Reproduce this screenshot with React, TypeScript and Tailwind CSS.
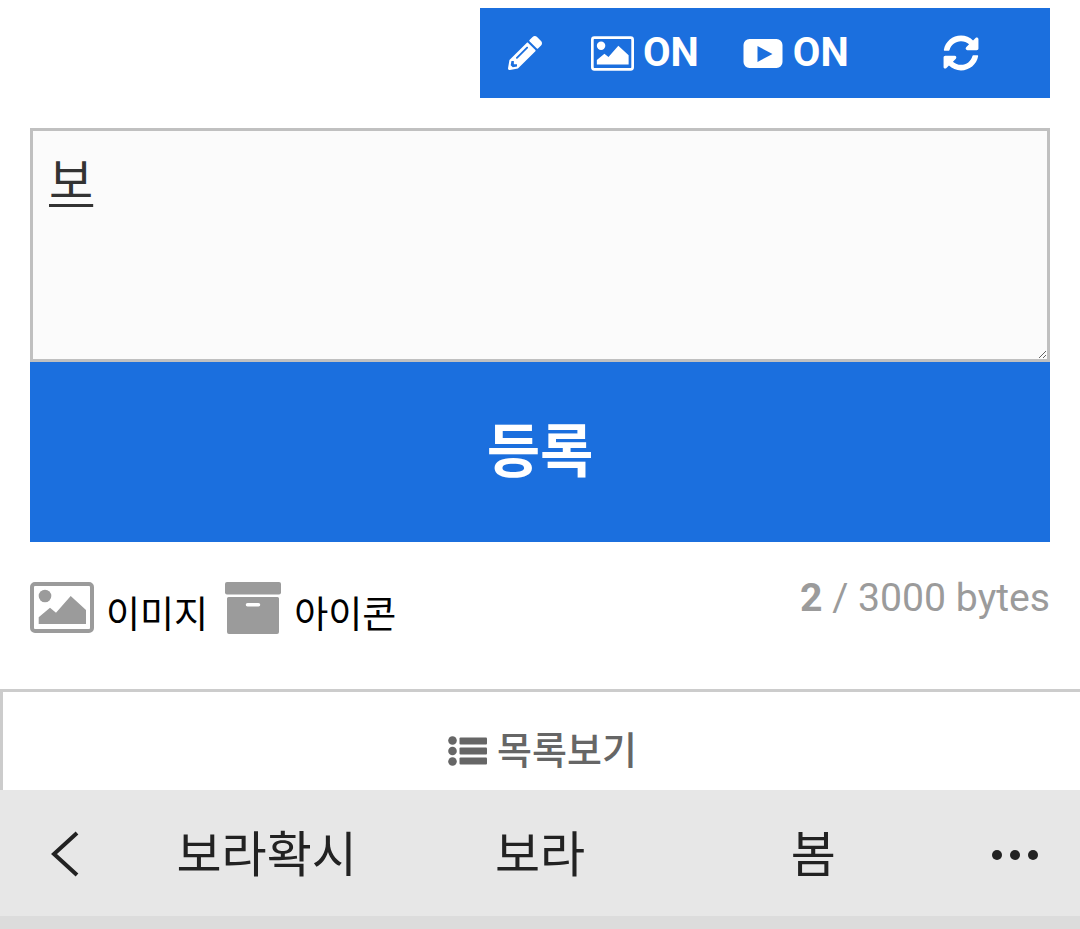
import React from 'react';
import { FaPencilAlt, FaSyncAlt } from 'react-icons/fa';

const cjk = "font-['Roboto','Noto_Sans_CJK_KR',sans-serif]";

const ImageIcon: React.FC<{ className?: string }> = ({ className }) => (
  <svg viewBox="0 0 64 51" fill="currentColor" className={className}>
    <rect x="2" y="2" width="60" height="47" rx="3" fill="none" stroke="currentColor" strokeWidth="4" />
    <circle cx="15" cy="14" r="6.3" />
    <path d="M8.7 35.3 20 25.7l6 5L40.7 14 56 28v14H8.700z" />
  </svg>
);

const PlayIcon: React.FC<{ className?: string }> = ({ className }) => (
  <svg viewBox="0 0 39 29" fill="currentColor" fillRule="evenodd" className={className}>
    <path d="M6 0h27a6 6 0 0 1 6 6v17a6 6 0 0 1-6 6H6a6 6 0 0 1-6-6V6a6 6 0 0 1 6-6zM14 7v16l15-8z" />
  </svg>
);

const BoxIcon: React.FC<{ className?: string }> = ({ className }) => (
  <svg viewBox="0 0 56 52" fill="currentColor" fillRule="evenodd" className={className}>
    <rect x="0" y="0" width="56" height="12.500" rx="2" />
    <path d="M3.500 15h49a1.500 1.500 0 0 1 1.500 1.500V50a2 2 0 0 1-2 2H4a2 2 0 0 1-2-2V16.500A1.500 1.500 0 0 1 3.500 15zM22.500 21a1.500 1.500 0 0 0 0 3.500h11a1.500 1.500 0 0 0 0-3.500z" />
  </svg>
);

const ListIcon: React.FC<{ className?: string }> = ({ className }) => (
  <svg viewBox="0 0 39 30" fill="currentColor" className={className}>
    <circle cx="4.500" cy="4.500" r="4.300" />
    <circle cx="4.500" cy="15" r="4.300" />
    <circle cx="4.500" cy="25.500" r="4.300" />
    <rect x="11.500" y="1.500" width="27.500" height="7" rx="1" />
    <rect x="11.500" y="11.500" width="27.500" height="7" rx="1" />
    <rect x="11.500" y="21.500" width="27.500" height="7" rx="1" />
  </svg>
);

const App: React.FC = () => {
  return (
    <div className={`w-[1080px] h-[929px] overflow-hidden bg-white flex flex-col ${cjk}`}>
      {/* toolbar */}
      <div className="mt-2 ml-[480px] w-[570px] h-[90px] shrink-0 bg-[#1b6fde] text-white flex items-center font-bold text-[40px] leading-none">
        <FaPencilAlt className="ml-7 w-[34px] h-[34px]" />
        <ImageIcon className="ml-[49px] w-[43px] h-[35px]" />
        <span className="ml-[9px]">ON</span>
        <PlayIcon className="ml-[44px] w-10 h-[29px]" />
        <span className="ml-[10px]">ON</span>
        <FaSyncAlt className="ml-[94px] w-9 h-9" />
      </div>

      {/* editor */}
      <div className="mt-[30px] mx-[30px] flex flex-col shrink-0">
        <textarea
          defaultValue="보"
          className="block w-[1020px] h-[234px] border-[3px] border-[#c0c0c0] bg-[#fbfbfb] pl-[16px] pr-[15px] pt-[19px] pb-[10px] text-[48px] leading-[64px] text-[#333] underline decoration-[3px] underline-offset-[6px] outline-none"
        />
        <button className="h-[180px] bg-[#1b6fde] text-white text-[58px] font-bold">등록</button>
      </div>

      {/* attachments */}
      <div className="mt-10 mx-[30px] h-[52px] shrink-0 flex justify-between">
        <div className="flex items-end text-[37px] leading-[36px] text-black">
          <ImageIcon className="w-16 h-[51px] mb-px text-[#9b9b9b]" />
          <span className="ml-3">이미지</span>
          <BoxIcon className="ml-[17px] w-14 h-[52px] text-[#9b9b9b]" />
          <span className="ml-[13px]">아이콘</span>
        </div>
        <div className="text-[39.2px] leading-[32px] text-[#9b9b9b]">
          <b>2</b> / 3000 bytes
        </div>
      </div>

      {/* list link */}
      <div className="mt-[55px] h-[101px] shrink-0 border-t-[3px] border-l-[3px] border-[#cccccc] flex items-start justify-center pt-[37px] text-[#666666]">
        <div className="flex items-center text-[38px] leading-[44px] font-medium">
          <ListIcon className="w-[39px] h-[30px] mr-2.5 ml-0.5" />
          <span>목록보기</span>
        </div>
      </div>

      {/* keyboard suggestions */}
      <div className="h-[126px] shrink-0 pt-[5px] bg-[#e7e7e7] grid grid-cols-[130px_1fr_1fr_1fr_130px] items-center text-[#222222] text-[49px]">
        <div className="flex justify-center">
          <svg viewBox="0 0 32 48" fill="none" stroke="currentColor" strokeWidth="4" className="w-8 h-12 -mt-1">
            <path d="M28 3 5 24l23 21" />
          </svg>
        </div>
        <div className="text-center">보라확시</div>
        <div className="text-center">보라</div>
        <div className="text-center">봄</div>
        <div className="flex justify-center gap-2 -mt-0.5">
          <span className="w-2.5 h-2.5 rounded-full bg-[#222222]" />
          <span className="w-2.5 h-2.5 rounded-full bg-[#222222]" />
          <span className="w-2.5 h-2.5 rounded-full bg-[#222222]" />
        </div>
      </div>
      <div className="flex-1 bg-[#dcdcdc]" />
    </div>
  );
};

export default App;
